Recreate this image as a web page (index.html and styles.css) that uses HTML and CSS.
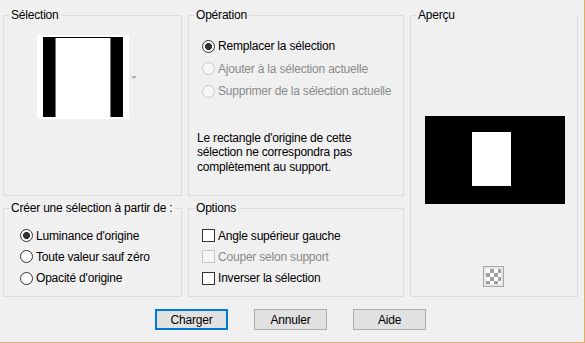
FILE: index.html
```html
<!DOCTYPE html>
<html lang="fr">
<head>
    <meta charset="UTF-8">
    <title>Charger la sélection</title>
    <link rel="stylesheet" href="styles.css">
</head>
<body>
<div class="dialog">
    <div class="groups">
        <!-- Sélection -->
        <div class="group group-selection">
            <span class="group-title">Sélection</span>
            <div class="thumb-row">
                <div class="thumb">
                    <div class="thumb-img"><div class="thumb-hole"></div></div>
                </div>
                <span class="drop-arrow"></span>
            </div>
        </div>

        <!-- Opération -->
        <div class="group group-operation">
            <span class="group-title">Opération</span>
            <div class="options op-list">
                <label class="option"><input type="radio" name="op" checked> Remplacer la sélection</label>
                <label class="option disabled"><input type="radio" name="op" disabled> Ajouter à la sélection actuelle</label>
                <label class="option disabled"><input type="radio" name="op" disabled> Supprimer de la sélection actuelle</label>
            </div>
            <p class="note">Le rectangle d'origine de cette<br>sélection ne correspondra pas<br>complètement au support.</p>
        </div>

        <!-- Aperçu -->
        <div class="group group-preview">
            <span class="group-title">Aperçu</span>
            <div class="preview"><div class="preview-hole"></div></div>
            <span class="checker-btn"><span class="checker"></span></span>
        </div>

        <!-- Créer -->
        <div class="group group-source">
            <span class="group-title">Créer une sélection à partir de :</span>
            <div class="options small-list">
                <label class="option"><input type="radio" name="src" checked> Luminance d'origine</label>
                <label class="option"><input type="radio" name="src"> Toute valeur sauf zéro</label>
                <label class="option"><input type="radio" name="src"> Opacité d'origine</label>
            </div>
        </div>

        <!-- Options -->
        <div class="group group-options">
            <span class="group-title">Options</span>
            <div class="options small-list">
                <label class="option"><input type="checkbox"> Angle supérieur gauche</label>
                <label class="option disabled"><input type="checkbox" disabled> Couper selon support</label>
                <label class="option"><input type="checkbox"> Inverser la sélection</label>
            </div>
        </div>
    </div>

    <div class="buttons">
        <button class="btn btn-default">Charger</button>
        <button class="btn">Annuler</button>
        <button class="btn">Aide</button>
    </div>
</div>
</body>
</html>
```

FILE: styles.css
```css
body {
    margin: 0;
    padding: 0;
    font-family: "Liberation Sans", Arial, sans-serif;
    font-size: 12px;
    letter-spacing: -0.2px;
    color: #000;
    background-color: #f0f0f0;
}

.dialog {
    box-sizing: border-box;
    width: 585px;
    height: 343px;
    padding: 15px 0 0 3px;
    background-color: #f0f0f0;
    border-right: 1px solid #dcb067;
    border-bottom: 1px solid #dcb067;
}

.groups {
    display: grid;
    grid-template-columns: 179px 216px 168px;
    grid-template-rows: 181px 89px;
    column-gap: 6px;
    row-gap: 12px;
}

.group {
    box-sizing: border-box;
    border: 1px solid #dcdcdc;
    display: flex;
    flex-direction: column;
    align-items: flex-start;
}

.group-title {
    display: inline-block;
    margin: -8px 0 0 5px;
    padding: 0 2px;
    line-height: 15px;
    white-space: nowrap;
    background-color: #f0f0f0;
}

.group-selection { grid-column: 1; grid-row: 1; }
.group-operation { grid-column: 2; grid-row: 1; }
.group-preview   { grid-column: 3; grid-row: 1 / span 2; align-items: stretch; }
.group-source    { grid-column: 1; grid-row: 2; }
.group-options   { grid-column: 2; grid-row: 2; }

/* thumbnail */
.thumb-row {
    display: flex;
    align-items: center;
    margin: 12px 0 0 33px;
}

.thumb {
    width: 92px;
    height: 84px;
    background: #fff;
    padding: 2px 0 0 6px;
    box-sizing: border-box;
}

.thumb-img {
    width: 80px;
    height: 80px;
    background: #000;
    display: flex;
    justify-content: center;
    align-items: flex-start;
}

.thumb-hole {
    width: 56px;
    height: 79px;
    margin-top: 1px;
    background: #fff;
    border-left: 1px solid #777;
    border-right: 1px solid #777;
    box-sizing: border-box;
}

.drop-arrow {
    width: 0;
    height: 0;
    margin: 0 0 0 2px;
    border-left: 3px solid transparent;
    border-right: 3px solid transparent;
    border-top: 3px solid #b0b0b0;
}

/* radio / checkbox lists */
.options {
    display: flex;
    flex-direction: column;
}

.op-list {
    margin: 12px 0 0 13px;
}

.op-list .option {
    height: 22.5px;
}

.small-list {
    margin: 9px 0 0 16px;
}

.group-options .small-list {
    margin-left: 13px;
}

.small-list .option {
    height: 21.3px;
}

.option {
    display: flex;
    align-items: center;
    white-space: nowrap;
}

.option.disabled {
    color: #8a8a8a;
}

.option input {
    appearance: none;
    -webkit-appearance: none;
    box-sizing: border-box;
    width: 13px;
    height: 13px;
    margin: 0 3px 0 0;
    border: 1px solid #333;
    background: #fff;
    flex: none;
}

.option input[type="radio"] {
    border-radius: 50%;
}

.option input[type="radio"]:checked {
    background: radial-gradient(circle, #333 0 3.3px, #fff 3.8px);
}

.option input:disabled {
    border-color: #c8c8c8;
    background: #f6f6f6;
}

.note {
    margin: 28px 0 0 8px;
    line-height: 14.5px;
}

/* preview */
.preview {
    width: 140px;
    height: 88px;
    margin: 93px 0 0 14px;
    background: #000;
    padding: 16px 0 0 47px;
    box-sizing: border-box;
}

.preview-hole {
    width: 39px;
    height: 54px;
    background: #fff;
}

.checker-btn {
    align-self: flex-start;
    margin: auto 0 9px 72px;
    width: 21px;
    height: 21px;
    box-sizing: border-box;
    border: 1px solid #a8a8a8;
    background: #e6e6e6;
    padding: 2px;
}

.checker {
    display: block;
    width: 15px;
    height: 15px;
    background: repeating-conic-gradient(#a0a0a0 0 25%, #fff 0 50%) 0 0 / 8px 8px;
}

/* buttons */
.buttons {
    display: flex;
    gap: 26px;
    margin: 12px 0 0 152px;
}

.btn {
    box-sizing: border-box;
    width: 73px;
    height: 21px;
    padding: 0;
    font-family: inherit;
    font-size: 12px;
    letter-spacing: inherit;
    color: #000;
    background: #e1e1e1;
    border: 1px solid #adadad;
}

.btn-default {
    border: 2px solid #0078d7;
}
```
